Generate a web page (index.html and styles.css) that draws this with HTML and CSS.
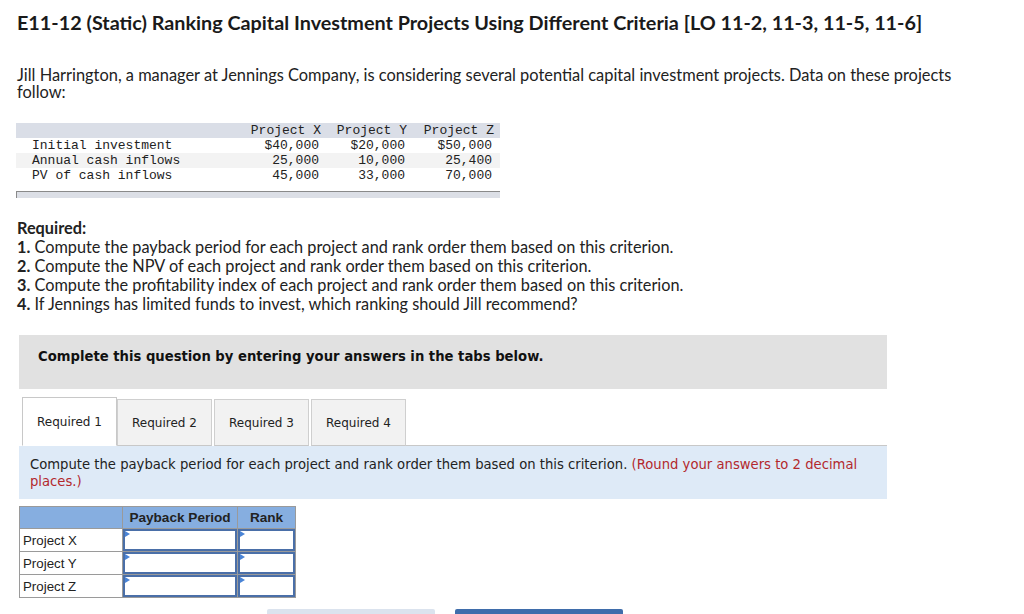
FILE: index.html
```html
<!DOCTYPE html>
<html>
<head>
<meta charset="utf-8">
<link rel="stylesheet" href="styles.css">
</head>
<body>
<div class="page">
  <h1 class="title">E11-12 (Static) Ranking Capital Investment Projects Using Different Criteria [LO 11-2, 11-3, 11-5, 11-6]</h1>
  <p class="intro">Jill Harrington, a manager at Jennings Company, is considering several potential capital investment projects. Data on these projects follow:</p>

  <div class="data">
    <div class="drow dhead">
      <span></span><span class="num">Project X</span><span class="num">Project Y</span><span class="num">Project Z</span>
    </div>
    <div class="drow">
      <span class="lbl">Initial investment</span><span class="num val">$40,000</span><span class="num val">$20,000</span><span class="num val">$50,000</span>
    </div>
    <div class="drow alt">
      <span class="lbl">Annual cash inflows</span><span class="num val">25,000</span><span class="num val">10,000</span><span class="num val">25,400</span>
    </div>
    <div class="drow">
      <span class="lbl">PV of cash inflows</span><span class="num val">45,000</span><span class="num val">33,000</span><span class="num val">70,000</span>
    </div>
    <div class="dfoot"></div>
  </div>

  <div class="required">
    <div class="req-title">Required:</div>
    <div><b>1.</b> Compute the payback period for each project and rank order them based on this criterion.</div>
    <div><b>2.</b> Compute the NPV of each project and rank order them based on this criterion.</div>
    <div><b>3.</b> Compute the profitability index of each project and rank order them based on this criterion.</div>
    <div><b>4.</b> If Jennings has limited funds to invest, which ranking should Jill recommend?</div>
  </div>

  <div class="notice">Complete this question by entering your answers in the tabs below.</div>

  <div class="tabs">
    <div class="tab active">Required 1</div>
    <div class="tab">Required 2</div>
    <div class="tab">Required 3</div>
    <div class="tab">Required 4</div>
    <div class="tab-fill"></div>
  </div>
  <div class="instr"><span>Compute the payback period for each project and rank order them based on this criterion.</span> <span class="red">(Round your answers to 2 decimal</span> <span class="red">places.)</span></div>

  <table class="answer">
    <tr class="ahead">
      <th class="c1"></th><th class="c2">Payback Period</th><th class="c3">Rank</th>
    </tr>
    <tr>
      <td class="rl">Project X</td><td class="inp"><div class="box"></div></td><td class="inp"><div class="box"></div></td>
    </tr>
    <tr>
      <td class="rl">Project Y</td><td class="inp"><div class="box"></div></td><td class="inp"><div class="box"></div></td>
    </tr>
    <tr>
      <td class="rl">Project Z</td><td class="inp"><div class="box"></div></td><td class="inp"><div class="box"></div></td>
    </tr>
  </table>

  <div class="buttons">
    <div class="btn prev"></div>
    <div class="btn next"></div>
  </div>
</div>
</body>
</html>
```

FILE: styles.css
```css
html, body {
  margin: 0;
  padding: 0;
  background: #fff;
}
body {
  width: 1024px;
  height: 614px;
  overflow: hidden;
}
.page {
  padding: 10px 0 0 17px;
  font-family: Lato, "Open Sans", sans-serif;
  color: #222;
}
.title {
  margin: 0;
  font-size: 19.8px;
  line-height: 24px;
  font-weight: 700;
  color: #1a1a1a;
}
.intro {
  margin: 32px 0 0 0;
  width: 950px;
  font-size: 16.4px;
  line-height: 17px;
}
.data {
  margin: 23px 0 0 -1px;
  width: 484px;
  font-family: "Liberation Mono", monospace;
  font-size: 13px;
  color: #222;
}
.drow {
  display: grid;
  grid-template-columns: 219px 86px 86px 87px;
  height: 15px;
  line-height: 15px;
}
.dhead {
  background: #dadee7;
}
.alt {
  background: #f3f3f3;
}
.lbl {
  padding-left: 16px;
  white-space: nowrap;
}
.num {
  text-align: right;
  white-space: nowrap;
}
.val {
  padding-right: 2px;
}
.dfoot {
  margin-top: 8px;
  height: 6px;
  background: #dcdfe6;
  border-top: 1px solid #8a8a8a;
  border-left: 1px solid #8a8a8a;
}
.required {
  margin-top: 20px;
  font-size: 16.3px;
  line-height: 19px;
}
.req-title {
  font-weight: 700;
}
.notice {
  margin: 22px 0 0 2px;
  width: 868px;
  height: 54px;
  box-sizing: border-box;
  padding: 14px 0 0 19px;
  background: #e1e1e1;
  font-family: "DejaVu Sans", Verdana, sans-serif;
  font-size: 13.2px;
  font-weight: 700;
  color: #111;
}
.tabs {
  margin: 8px 0 0 2px;
  width: 868px;
  display: flex;
  align-items: flex-end;
  height: 49px;
}
.tab {
  width: 95px;
  height: 47px;
  box-sizing: border-box;
  border: 1px solid #cfcfcf;
  background: #f2f2f2;
  margin-right: 2px;
  display: flex;
  align-items: center;
  justify-content: center;
  font-family: "DejaVu Sans", Verdana, sans-serif;
  font-size: 12px;
  color: #222;
  border-bottom: 1px solid #c8c8c8;
}
.tab.active {
  background: #fff;
  border-color: #c8c8c8;
  border-bottom: 1px solid #fff;
  height: 49px;
  margin-left: 3px;
  margin-right: 0;
}
.tab-fill {
  flex: 1;
  height: 1px;
  background: #c8c8c8;
  margin-left: -2px;
}
.instr {
  margin-left: 2px;
  width: 868px;
  height: 53px;
  box-sizing: border-box;
  padding: 10px 16px 0 11px;
  background: #deeaf7;
  font-family: "DejaVu Sans", Verdana, sans-serif;
  font-size: 13.2px;
  line-height: 17px;
  color: #222;
}
.red {
  color: #b3282d;
}
.answer {
  margin: 7px 0 0 2px;
  border-collapse: collapse;
  font-family: "Liberation Sans", Arial, sans-serif;
  font-size: 13.3px;
  color: #222;
}
.answer th, .answer td {
  padding: 0;
  border: 1px solid #9a9a9a;
}
.ahead th {
  background: #86aee0;
  height: 21px;
  font-weight: 700;
  font-size: 13.6px;
  text-align: center;
}
.c1 { width: 102px; }
.c2 { width: 114px; }
.c3 { width: 57px; }
.rl {
  height: 22px;
  padding-left: 3px !important;
  text-align: left;
  background: #fff;
}
.inp {
  background: #fff;
  height: 22px;
}
.box {
  position: relative;
  box-sizing: border-box;
  height: 22px;
  border: 2px solid #4a6fa8;
  background: #fff;
}
.box::before {
  content: "";
  position: absolute;
  left: 0;
  top: 0;
  border-left: 5px solid #4a84d6;
  border-top: 3px solid transparent;
  border-bottom: 3px solid transparent;
}
.buttons {
  display: flex;
  margin: 11px 0 0 250px;
  gap: 20px;
}
.btn {
  width: 168px;
  height: 20px;
  border-radius: 2px;
}
.prev { background: #dbe3ee; }
.next { background: #3f6dab; }
```
